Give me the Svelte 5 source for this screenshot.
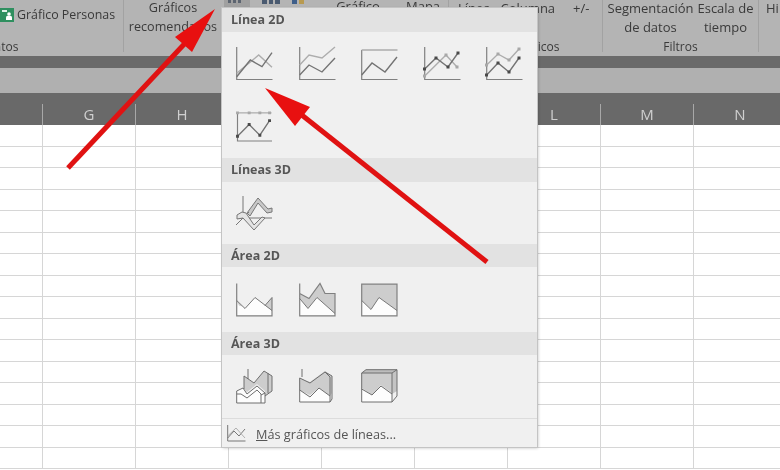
<script lang="ts">
  const columns = ['', 'G', 'H', 'I', 'J', 'K', 'L', 'M', 'N'];
  const rows = Array.from({ length: 16 });
</script>

<div class="page">
  <div class="ribbon">
    <div class="group g-people">
      <div class="people">
        <svg class="people-icon" viewBox="0 0 14 14" width="14" height="14">
          <rect width="14" height="14" fill="#2f8f5f" />
          <rect x="2" y="2" width="5" height="2" fill="#dff0e6" />
          <circle cx="9" cy="6" r="1.8" fill="#fff" />
          <path d="M6 12 v-2.5 a3 2 0 0 1 6 0 V12z" class="white" />
        </svg>
        <span>Gráfico Personas</span>
      </div>
      <div class="group-label addins">Complementos</div>
    </div>
    <div class="group g-charts">
      <div class="recommended">Gráficos<br />recomendados</div>
      <div class="chart-icons">
        <span class="active"><i></i><i></i><i></i></span>
        <span class="blue"><i></i><i></i><i></i></span>
        <span class="mixed"><i></i><i></i></span>
      </div>
      <div class="dynamic">Gráfico</div>
      <div class="map">Mapa</div>
    </div>
    <div class="group g-spark">
      <div class="spark-items">
        <span>Línea</span><span>Columna</span><span class="plus">+/-</span>
      </div>
      <div class="group-label spark-label">Minigráficos</div>
    </div>
    <div class="group g-filter">
      <div class="filter-items">
        <span>Segmentación<br />de datos</span>
        <span>Escala de<br />tiempo</span>
      </div>
      <div class="group-label">Filtros</div>
    </div>
    <div class="group g-last">Hi</div>
  </div>

  <div class="dark-bar"></div>
  <div class="formula-bar"></div>

  <div class="col-head">
    {#each columns as col}
      <div class="col-cell">{col}</div>
    {/each}
  </div>

  <div class="sheet">
    {#each rows as _}
      <div class="sheet-row">
        {#each columns as col}
          <div class="sheet-cell"></div>
        {/each}
      </div>
    {/each}
  </div>

  <div class="menu">
    <div class="menu-head">Línea 2D</div>
    <div class="icon-grid line-2d">
      <svg viewBox="0 0 37 34">
        <path class="axis" d="M.7 0V32.500H36.500" />
        <path class="light" d="M.7 26.300 22.700 8 36 20.300" />
        <path class="dark" d="M.7 29.700 14.300 13 26 19.700 36 5.700" />
      </svg>
      <svg viewBox="0 0 37 34">
        <path class="axis" d="M.7 0V32.500H36.500" />
        <path class="light" d="M.7 18 10 8 23 11 36 0" />
        <path class="dark" d="M.7 28 10 18 23 25 36 11" />
      </svg>
      <svg viewBox="0 0 37 34">
        <path class="axis" d="M.7 3V32.500H36.500" />
        <path class="light" d="M.7 3H36.500" />
        <path class="dark" d="M.7 28 11 16 24 25 36 10" />
      </svg>
      <svg viewBox="0 0 37 34">
        <path class="axis" d="M.7 0V32.500H36.500" />
        <path class="light" d="M.7 29 22 8 33 20" />
        <path class="dark" d="M.7 22 12 11 24 20 34 6" />
        <path class="mark-light" d="M-1 27.500h3v3h-3zM20.500 6.500h3v3h-3zM31.500 18.500h3v3h-3z" />
        <path class="mark-dark" d="M-1 20.500h3v3h-3zM10.500 9.500h3v3h-3zM22.500 18.500h3v3h-3zM32.500 4.500h3v3h-3z" />
      </svg>
      <svg viewBox="0 0 37 34">
        <path class="axis" d="M.7 0V32.500H36.500" />
        <path class="light" d="M.7 18 12 7 23 13 33 2" />
        <path class="dark" d="M.7 28 12 16 23 25 33 11" />
        <path class="mark-light" d="M-1 16.500h3v3h-3zM10.500 5.500h3v3h-3zM21.500 11.500h3v3h-3zM31.500 .5h3v3h-3z" />
        <path class="mark-dark" d="M-1 26.500h3v3h-3zM10.500 14.500h3v3h-3zM21.500 23.500h3v3h-3zM31.500 9.500h3v3h-3z" />
      </svg>
      <svg viewBox="0 0 37 35">
        <path class="axis" d="M1 5V34H36.500" />
        <path class="light" d="M1 5H36" />
        <path class="dark" d="M1 29 13 17 24 28 34 13" />
        <path class="mark-light" d="M-.5 3.500h3v3h-3zM11.500 3.500h3v3h-3zM22.500 3.500h3v3h-3zM32.500 3.500h3v3h-3z" />
        <path class="mark-dark" d="M-.5 27.500h3v3h-3zM11.500 15.500h3v3h-3zM22.500 26.500h3v3h-3zM32.500 11.500h3v3h-3z" />
      </svg>
    </div>

    <div class="menu-head">Líneas 3D</div>
    <div class="icon-grid line-3d">
      <svg viewBox="0 0 37 37" class="tall">
        <path class="band" d="M11 18 22 3 32 14 36 13 36 17 31 18 22 8 14 21z" />
        <path class="axis-thin" d="M7 1V22M1 23H36M0 30 13 17" />
        <path class="band-front" d="M1 20 6 17 10 18 18 30 26 22 29 23 18 35 7 23 1 24z" />
      </svg>
    </div>

    <div class="menu-head short">Área 2D</div>
    <div class="icon-grid area-2d">
      <svg viewBox="0 0 37 33">
        <path class="fill-white" d="M.7 19 9 25 19 14 36 27V32H.7z" />
        <path class="fill-grey" d="M.7 17 6.500 23 3 22zM29 22 36 14V27z" />
        <path class="axis" d="M.7 0V32.300H36V14" />
        <path class="axis-thin" d="M.7 17 9 25 19 14 36 27M29 22 36 14" />
      </svg>
      <svg viewBox="0 0 37 33">
        <path class="fill-grey" d="M.7 10 10 15 21 0 26 10H36V30L18 14 9 25 .7 15z" />
        <path class="fill-white" d="M.7 15 9 25 18 14 36 30V32H.7z" />
        <path class="axis" d="M.7 0V32.300H36V10H26L21 0 10 15 .7 10" />
        <path class="axis-thin" d="M.7 15 9 25 18 14 36 30" />
      </svg>
      <svg viewBox="0 0 37 33">
        <path class="fill-grey" d="M.7.7H36V27L18 14 10 26 .7 17z" />
        <path class="fill-white" d="M.7 17 10 26 18 14 36 27V32H.7z" />
        <path class="axis" d="M.7.7V32.300H36V.7z" />
        <path class="axis-thin" d="M.7 17 10 26 18 14 36 27" />
      </svg>
    </div>

    <div class="menu-head short">Área 3D</div>
    <div class="icon-grid area-3d">
      <svg viewBox="0 0 37 34">
        <path class="back" d="M8 7 18 14 28 2 36 7V22L29 27V22L21 15 11 23 8 20z" />
        <path class="front" d="M.7 22 7 19 11 25 21 17 29 24V34H.7z" />
        <path class="outline" d="M12 0V10M8 7 18 14 28 2 36 7V22L29 27M32 4V24M8 7V20" />
        <path class="outline" d="M.7 22 7 19 11 25 21 17 29 24V34H.7zM.7 25H5L11 29 21 21 25 25V34M29 24 25 26" />
      </svg>
      <svg viewBox="0 0 37 34">
        <path class="back" d="M0 9 11 13 26 2 33 7V24L31 27 20 19 11 26 0 21z" />
        <path class="front" d="M.7 21 11 28 20 19 31 27V33H.7z" />
        <path class="outline" d="M3 0V8M.7 9 11 14 26 3 33 7V30L31 33H.7V9M31 33V8L26 3M.7 21 11 28 20 19 31 27" />
      </svg>
      <svg viewBox="0 0 37 34">
        <path class="back" d="M.7 4H31V24L20 16 11 26 .7 19z" />
        <path class="top" d="M.7 4 5 .7H36L31 4z" />
        <path class="side" d="M31 4 36 .7V22L31 25z" />
        <path class="front" d="M.7 20 11 26 20 17 31 25V33H.7z" />
        <path class="outline" d="M.7 4H31V33H.7zM.7 4 5 .7H36V27L31 33M31 4 36 .7M.7 20 11 26 20 17 31 25" />
      </svg>
    </div>

    <div class="menu-foot">
      <svg viewBox="0 0 19 17" width="19" height="17">
        <path class="axis-thin" d="M.7 0V16H18.500" />
        <path class="axis-thin" d="M.7 13 7 6 12 11 18 4" />
        <path class="axis-light" d="M.7 11 9 3 18 13" />
      </svg>
      <span><u>M</u>ás gráficos de líneas...</span>
    </div>
  </div>

  <svg class="arrows" viewBox="0 0 780 470" width="780" height="470">
    <path d="M68 168 190 38" class="shaft" />
    <path d="M215 9 175 37 192 52z" class="head" />
    <path d="M487 262 298 112" class="shaft" />
    <path d="M265 88 310 107 295 126z" class="head" />
  </svg>
</div>

<style>
  :global(body) {
    margin: 0;
  }

  .page {
    position: relative;
    width: 780px;
    height: 470px;
    overflow: hidden;
    background: #fff;
    color: #3a3a3a;
    font-family: 'Open Sans', 'Noto Sans', sans-serif;
    font-size: 13px;
    filter: blur(0.45px);
  }

  .ribbon {
    display: flex;
    height: 56px;
    overflow: hidden;
    background: #b4b4b4;
    line-height: 18.5px;
  }

  .group {
    position: relative;
    display: flex;
    flex-direction: column;
    flex: none;
    box-sizing: border-box;
    height: 52px;
    border-right: 1px solid #a2a2a2;
    text-align: center;
  }

  .g-people {
    width: 124px;
  }

  .people {
    display: flex;
    align-items: center;
    gap: 3px;
    height: 38px;
    margin-top: -4px;
    font-size: 12.4px;
    white-space: nowrap;
    text-align: left;
  }

  .group-label {
    margin-top: auto;
    margin-bottom: -3px;
    font-size: 12px;
    line-height: 16px;
    white-space: nowrap;
  }

  .addins {
    margin-left: -67px;
    text-align: left;
  }

  .g-charts {
    display: flex;
    flex-direction: row;
    width: 325px;
  }

  .recommended {
    width: 98px;
    margin-top: -1px;
    font-size: 12.6px;
  }

  .chart-icons {
    display: flex;
    gap: 12px;
    width: 100px;
    height: 8px;
    padding-left: 2px;
  }

  .chart-icons span {
    display: flex;
    align-items: flex-end;
    gap: 2px;
    height: 4px;
  }

  .chart-icons i {
    display: block;
    width: 5px;
    height: 4px;
    background: #4a5a70;
  }

  .chart-icons .active {
    width: 26px;
    height: 8px;
    padding: 0 4px;
    box-sizing: border-box;
    background: #a0a0a0;
    align-items: flex-start;
  }

  .chart-icons .active i {
    width: 3px;
    height: 3px;
    background: #5c6470;
  }

  .chart-icons .blue {
    width: 18px;
  }

  .chart-icons .mixed i:first-child {
    background: #3f5f8a;
  }

  .chart-icons .mixed i:last-child {
    background: #b89a50;
  }

  .dynamic {
    width: 60px;
    margin-top: -3px;
    margin-left: 4px;
  }

  .map {
    margin-top: -3px;
    margin-left: 18px;
  }

  .g-spark {
    width: 154px;
  }

  .spark-items {
    display: flex;
    gap: 10px;
    margin-top: -1px;
    padding-left: 9px;
  }

  .plus {
    margin-left: 8px;
  }

  .g-filter {
    width: 156px;
  }

  .filter-items {
    display: flex;
    justify-content: center;
    gap: 4px;
    margin-top: -1px;
    white-space: nowrap;
  }

  .g-last {
    flex: 1;
    border: 0;
    margin-top: -1px;
    padding-left: 7px;
    text-align: left;
  }

  .dark-bar {
    height: 12px;
    background: #6a6a6a;
  }

  .formula-bar {
    height: 25px;
    background: #b0b0b0;
  }

  .col-head {
    display: flex;
    height: 32px;
    background: #696969;
    color: #cfcfcf;
    font-size: 15px;
  }

  .col-cell {
    flex: none;
    box-sizing: border-box;
    width: 93px;
    height: 21px;
    margin-top: 11px;
    border-right: 1px solid #a8a8a8;
    text-align: center;
    line-height: 21px;
  }

  .col-cell:first-child,
  .sheet-cell:first-child {
    width: 43px;
  }

  .sheet-row {
    display: flex;
    height: 21.5px;
    box-sizing: border-box;
    border-bottom: 1px solid #d6d6d6;
  }

  .sheet-cell {
    flex: none;
    box-sizing: border-box;
    width: 93px;
    border-right: 1px solid #d6d6d6;
  }

  .menu {
    position: absolute;
    top: 8px;
    left: 222px;
    width: 315px;
    height: 439px;
    box-sizing: border-box;
    background: #f0f0f0;
    box-shadow: 0 0 0 1px #c4c4c4, 1px 1px 3px rgba(0, 0, 0, 0.25);
  }

  .menu-head {
    height: 24px;
    padding-left: 9px;
    background: #e2e2e2;
    color: #565656;
    font-weight: 700;
    font-size: 12.5px;
    line-height: 24px;
  }

  .menu-head.short {
    height: 23px;
    line-height: 23px;
  }

  .icon-grid {
    display: grid;
    grid-template-columns: repeat(5, 37px);
    column-gap: 25.5px;
    row-gap: 27px;
    padding-left: 14px;
  }

  .icon-grid svg {
    display: block;
    width: 37px;
    height: 34px;
    overflow: visible;
  }

  .icon-grid svg.tall {
    height: 37px;
  }

  .line-2d {
    padding-top: 15px;
    padding-bottom: 16px;
  }

  .line-3d {
    padding-top: 13px;
    padding-bottom: 12px;
  }

  .area-2d {
    padding-top: 16px;
    padding-bottom: 15px;
  }

  .area-3d {
    padding-top: 14px;
    padding-bottom: 15px;
  }

  path {
    fill: none;
    stroke-width: 1.2;
  }

  .white {
    fill: #fff;
    stroke: none;
  }

  .axis {
    stroke: #808080;
  }

  .axis-thin {
    stroke: #777;
    stroke-width: 1;
  }

  .axis-light {
    stroke: #b0b0b0;
    stroke-width: 1;
  }

  .outline {
    stroke: #6e6e6e;
    stroke-width: 1;
  }

  .light {
    stroke: #adadad;
    stroke-width: 1.4;
  }

  .dark {
    stroke: #747474;
    stroke-width: 1.4;
  }

  .mark-light {
    fill: #a8a8a8;
    stroke: none;
  }

  .mark-dark {
    fill: #4a4a4a;
    stroke: none;
  }

  .band {
    fill: #c8c8c8;
    stroke: #777;
    stroke-width: 1;
  }

  .band-front {
    fill: #e4e4e4;
    stroke: #777;
    stroke-width: 1;
  }

  .fill-grey,
  .back {
    fill: #cdcdcd;
    stroke: none;
  }

  .fill-white,
  .front {
    fill: #fdfdfd;
    stroke: none;
  }

  .top {
    fill: #bdbdbd;
    stroke: none;
  }

  .side {
    fill: #c4c4c4;
    stroke: none;
  }

  .menu-foot {
    display: flex;
    align-items: center;
    gap: 10px;
    box-sizing: border-box;
    height: 30px;
    padding-left: 5px;
    border-top: 1px solid #dcdcdc;
    color: #555;
    font-size: 12.7px;
  }

  .arrows {
    position: absolute;
    inset: 0;
  }

  .shaft {
    stroke: #e01212;
    stroke-width: 5;
  }

  .head {
    fill: #e81010;
    stroke: none;
  }
</style>
